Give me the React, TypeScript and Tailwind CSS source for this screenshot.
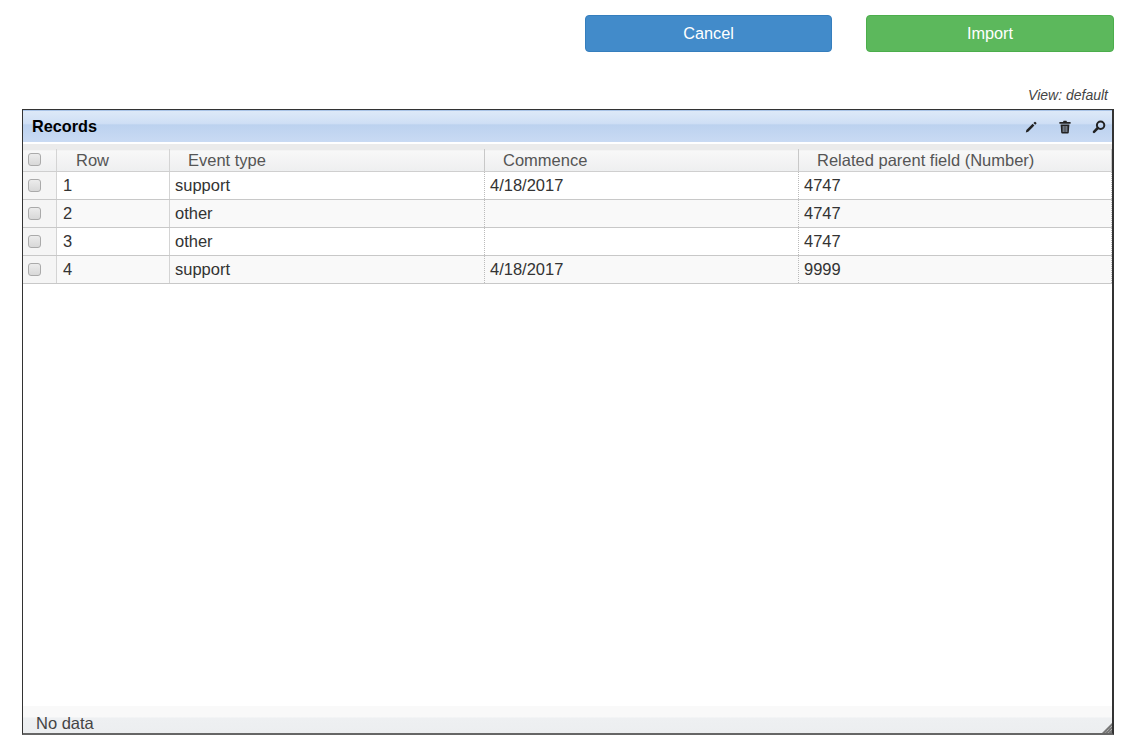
import React from 'react';

const rows = [
  { id: '1', type: 'support', date: '4/18/2017', parent: '4747' },
  { id: '2', type: 'other', date: '', parent: '4747' },
  { id: '3', type: 'other', date: '', parent: '4747' },
  { id: '4', type: 'support', date: '4/18/2017', parent: '9999' },
];

const Check = ({ lift }: { lift: string }) => (
  <span className={`block w-[13px] h-[13px] rounded-[3px] border border-[#aaa] bg-gradient-to-b from-[#ececec] to-[#d8d8d8] ${lift}`} />
);

const PencilIcon = () => (
  <svg width="14" height="14" viewBox="0 0 14 14">
    <path d="M1.8 12.6 L2.4 10 L8.6 3.8 L10.4 5.6 L4.2 11.8 Z" fill="#222" />
    <path d="M9.4 3 L10.5 1.9 Q11 1.5 11.5 1.9 L12.3 2.7 Q12.7 3.2 12.3 3.7 L11.2 4.8 Z" fill="#222" />
  </svg>
);

const TrashIcon = () => (
  <svg width="14" height="14" viewBox="0 0 14 14">
    <path d="M5 2 L5.6 0.8 H8.4 L9 2 H12.6 V3.8 H1.4 V2 Z" fill="#222" />
    <path d="M2.6 4.6 H11.4 L10.8 12.4 Q10.7 13.4 9.7 13.4 H4.3 Q3.3 13.4 3.2 12.4 Z" fill="#222" />
    <path d="M5.2 6 V12 M7 6 V12 M8.8 6 V12" stroke="#c4d6ee" strokeWidth="0.7" />
  </svg>
);

const SearchIcon = () => (
  <svg width="14" height="14" viewBox="0 0 14 14" fill="none">
    <circle cx="8.6" cy="5.2" r="3.7" stroke="#222" strokeWidth="2" />
    <path d="M5.8 8 L2 11.8" stroke="#222" strokeWidth="2.6" strokeLinecap="round" />
  </svg>
);

const App = () => {
  return (
    <div className="w-[1137px] h-[751px] bg-white overflow-hidden flex flex-col font-['Liberation_Sans',Arial,sans-serif]">
      <div className="flex justify-end gap-[34px] pt-[15px] pr-[23px]">
        <button className="w-[247px] h-[37px] rounded-[4px] border border-[#357ebd] bg-[#428bca] text-white text-[16.3px]">
          Cancel
        </button>
        <button className="w-[248px] h-[37px] rounded-[4px] border border-[#4cae4c] bg-[#5cb85c] text-white text-[16.3px]">
          Import
        </button>
      </div>

      <div className="h-[57px] flex items-end justify-end pr-[29px] pb-[6px] text-[14px] leading-[15px] italic text-[#444]">
        View: default
      </div>

      <div className="mx-[22px] w-[1092px] h-[626px] border border-[#333] border-r-2 border-b-2 border-b-[#666] flex flex-col">
        <div className="h-[32px] shrink-0 flex items-center justify-between pl-[9px] pr-[6px] bg-[linear-gradient(to_bottom,#dde9f8_0%,#cfdff5_40%,#bcd2ef_45%,#c9daf3_100%)] border-t border-[#a9c3e6]">
          <span className="text-[16.25px] font-bold text-black">Records</span>
          <div className="flex items-center gap-[20px]">
            <PencilIcon />
            <TrashIcon />
            <SearchIcon />
          </div>
        </div>

        <div className="h-[2px] shrink-0 bg-white" />

        <div className="h-[28px] shrink-0 flex pt-[5px] text-[16.5px] text-[#555] border-b border-[#cfcfcf] bg-[linear-gradient(to_bottom,#ebebeb_0%,#ebebeb_22%,#f8f8f8_25%,#eeeff0_100%)]">
          <div className="w-[34px] shrink-0 flex items-center pl-[5px] border-r border-[#d4d4d4]">
            <Check lift="mb-[2px]" />
          </div>
          <div className="w-[113px] shrink-0 flex items-center pl-[19px] border-r border-[#d4d4d4]">Row</div>
          <div className="w-[315px] shrink-0 flex items-center pl-[18px] border-r border-[#c8c8c8]">Event type</div>
          <div className="w-[314px] shrink-0 flex items-center pl-[18px] border-r border-[#c8c8c8]">Commence</div>
          <div className="flex-1 flex items-center pl-[18px] border-r border-[#c8c8c8]">Related parent field (Number)</div>
        </div>

        <div className="flex-1 flex flex-col bg-white">
          {rows.map((row, i) => (
            <div
              key={row.id}
              className={`h-[28px] shrink-0 flex text-[16.5px] text-[#333] border-b border-[#c8c8c8] ${i % 2 === 1 ? 'bg-[#f9f9f9]' : 'bg-white'}`}
            >
              <div className="w-[34px] shrink-0 flex items-center pl-[5px] bg-[#f5f5f5] border-r border-[#d4d4d4]">
                <Check lift="mb-px" />
              </div>
              <div className="w-[113px] shrink-0 flex items-center pl-[6px] border-r border-[#d4d4d4]">{row.id}</div>
              <div className="w-[315px] shrink-0 flex items-center pl-[5px] border-r border-dotted border-[#bbb]">{row.type}</div>
              <div className="w-[314px] shrink-0 flex items-center pl-[5px] border-r border-dotted border-[#bbb]">{row.date}</div>
              <div className="flex-1 flex items-center pl-[5px] border-r border-dotted border-[#bbb]">{row.parent}</div>
            </div>
          ))}
        </div>

        <div className="relative h-[27px] shrink-0 flex items-end pl-[13px] text-[16.5px] leading-[20px] text-[#444] bg-[linear-gradient(to_bottom,#f9f9f9_0%,#f9f9f9_40%,#eef0f2_45%,#eceef0_100%)]">
          No data
          <svg className="absolute right-0 bottom-0" width="10" height="10" viewBox="0 0 10 10">
            <path d="M10 0 V10 H0 Z" fill="#777" />
            <path d="M10 3 L3 10 M10 6 L6 10" stroke="#ddd" strokeWidth="0.8" strokeDasharray="1 1" />
          </svg>
        </div>
      </div>
    </div>
  );
};

export default App;
